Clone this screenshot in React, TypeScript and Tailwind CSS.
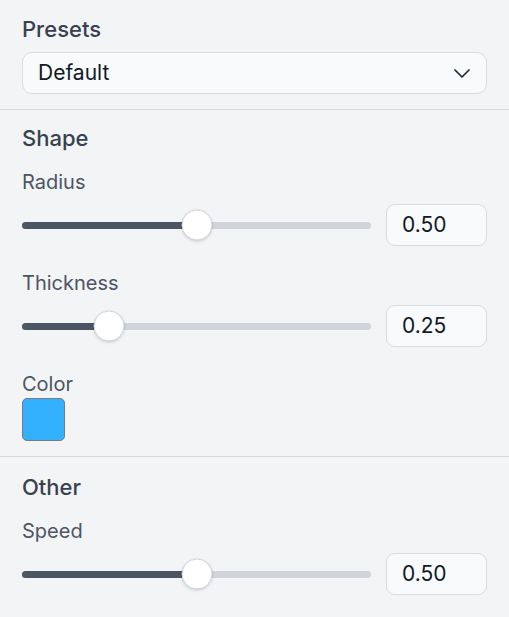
import React from 'react';

const font = { fontFamily: 'Inter, "Noto Sans", sans-serif' };

const SliderRow: React.FC<{ label: string; value: number }> = ({ label, value }) => (
  <div className="flex flex-col">
    <div className="text-[20px] leading-[24px] text-[#4b5563] mb-[10px]">{label}</div>
    <div className="flex items-center gap-[15px]">
      <div className="relative flex-1 h-[42px] flex items-center">
        <div className="w-full h-[7px] rounded-full bg-[#d1d5db] overflow-hidden">
          <div className="h-full bg-[#4b5563]" style={{ width: `${value * 100}%` }} />
        </div>
        <div
          className="absolute top-1/2 w-[31px] h-[31px] -translate-x-1/2 -translate-y-1/2 rounded-full bg-white border border-[#d1d5db] shadow-[0_1px_3px_rgba(0,0,0,0.15)]"
          style={{ left: `${value * 100}%` }}
        />
      </div>
      <div className="w-[101px] h-[42px] rounded-[9px] border border-[#d8dbe0] bg-[#f9fafb] flex items-center pl-[15px] text-[21px] text-[#111827]">
        {value.toFixed(2)}
      </div>
    </div>
  </div>
);

export default function App() {
  return (
    <div className="w-[509px] min-h-[617px] bg-[#f3f4f6]" style={font}>
      <section className="px-[22px] pt-[15px] pb-[15px] flex flex-col gap-[9px] border-b border-[#d6d8dc]">
        <h2 className="text-[22px] leading-[28px] font-medium text-[#374151]">Presets</h2>
        <div className="h-[42px] rounded-[10px] border border-[#d8dbe0] bg-[#f9fafb] flex items-center justify-between pl-[15px] pr-[16px]">
          <span className="text-[21px] text-[#111827]">Default</span>
          <svg width="16" height="9" viewBox="0 0 16 9" fill="none">
            <path d="M1 1l7 7 7-7" stroke="#1f2937" strokeWidth="1.7" strokeLinecap="round" strokeLinejoin="round" />
          </svg>
        </div>
      </section>

      <section className="px-[22px] pt-[14px] pb-[15px] flex flex-col border-b border-[#d6d8dc]">
        <h2 className="text-[22px] leading-[28px] font-medium text-[#374151] mb-[18px]">Shape</h2>
        <div className="flex flex-col gap-[25px]">
          <SliderRow label="Radius" value={0.5} />
          <SliderRow label="Thickness" value={0.25} />
          <div className="flex flex-col">
            <div className="text-[20px] leading-[24px] text-[#4b5563] mb-[2px]">Color</div>
            <div className="w-[43px] h-[43px] rounded-[5px] border-[1.5px] border-[#7a7a7a] bg-[#33b1ff]" />
          </div>
        </div>
      </section>

      <section className="px-[22px] pt-[16px] pb-[15px] flex flex-col">
        <h2 className="text-[22px] leading-[28px] font-medium text-[#374151] mb-[18px]">Other</h2>
        <SliderRow label="Speed" value={0.5} />
      </section>
    </div>
  );
}
